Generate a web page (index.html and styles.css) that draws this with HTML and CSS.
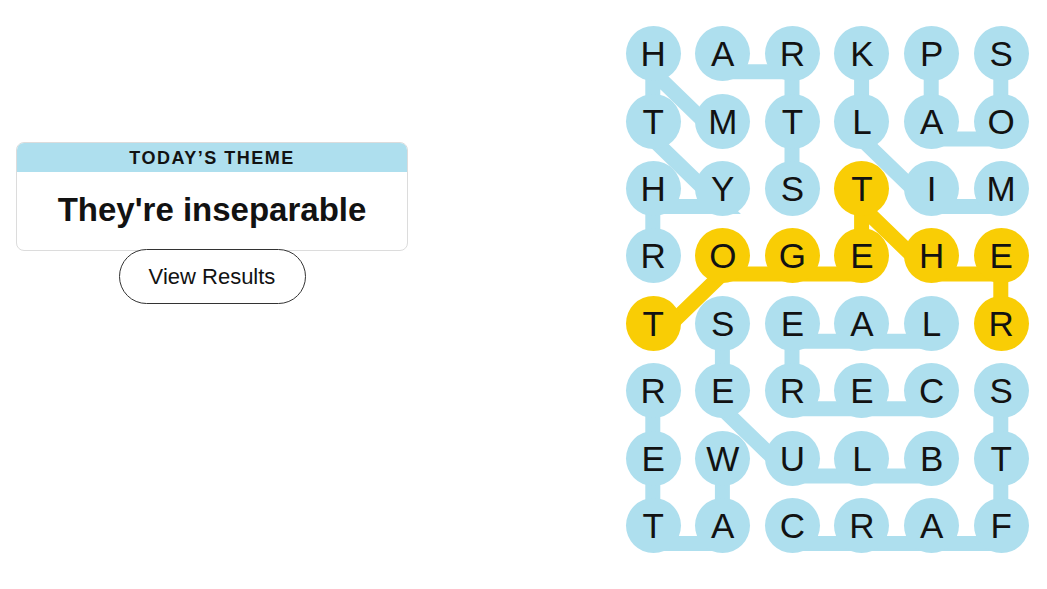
FILE: index.html
```html
<!DOCTYPE html>
<html lang="en">
<head>
<meta charset="utf-8">
<title>Strands</title>
<link rel="stylesheet" href="styles.css">
</head>
<body>
<main class="page">
  <section class="side">
    <div class="theme-card">
      <div class="theme-head">TODAY’S THEME</div>
      <div class="theme-body">They're inseparable</div>
    </div>
    <button class="results-btn" type="button">View Results</button>
  </section>

  <section class="board">
    <svg class="paths" width="418" height="540" viewBox="0 0 418 540" aria-hidden="true">
      <g class="blue">
        <polyline points="34.8,253.9 34.8,186.5 104.4,186.5 34.8,119.1 34.8,51.7 104.4,119.1"/>
        <polyline points="104.4,51.7 174,51.7 174,119.1 174,186.5"/>
        <polyline points="382.8,186.5 313.2,186.5 243.6,119.1 243.6,51.7"/>
        <polyline points="382.8,51.7 382.8,119.1 313.2,119.1 313.2,51.7"/>
        <polyline points="313.2,388.7 243.6,388.7 174,388.7 174,321.3 243.6,321.3 313.2,321.3"/>
        <polyline points="313.2,456.1 243.6,456.1 174,456.1 104.4,388.7 104.4,321.3"/>
        <polyline points="104.4,456.1 104.4,523.5 34.8,523.5 34.8,456.1 34.8,388.7"/>
        <polyline points="174,523.5 243.6,523.5 313.2,523.5 382.8,523.5 382.8,456.1 382.8,388.7"/>
      </g>
      <g class="gold">
        <polyline points="34.8,321.3 104.4,253.9 174,253.9 243.6,253.9 243.6,186.5 313.2,253.9 382.8,253.9 382.8,321.3"/>
      </g>
    </svg>

    <span class="cell found">H</span><span class="cell found">A</span><span class="cell found">R</span><span class="cell found">K</span><span class="cell found">P</span><span class="cell found">S</span>
    <span class="cell found">T</span><span class="cell found">M</span><span class="cell found">T</span><span class="cell found">L</span><span class="cell found">A</span><span class="cell found">O</span>
    <span class="cell found">H</span><span class="cell found">Y</span><span class="cell found">S</span><span class="cell span">T</span><span class="cell found">I</span><span class="cell found">M</span>
    <span class="cell found">R</span><span class="cell span">O</span><span class="cell span">G</span><span class="cell span">E</span><span class="cell span">H</span><span class="cell span">E</span>
    <span class="cell span">T</span><span class="cell found">S</span><span class="cell found">E</span><span class="cell found">A</span><span class="cell found">L</span><span class="cell span">R</span>
    <span class="cell found">R</span><span class="cell found">E</span><span class="cell found">R</span><span class="cell found">E</span><span class="cell found">C</span><span class="cell found">S</span>
    <span class="cell found">E</span><span class="cell found">W</span><span class="cell found">U</span><span class="cell found">L</span><span class="cell found">B</span><span class="cell found">T</span>
    <span class="cell found">T</span><span class="cell found">A</span><span class="cell found">C</span><span class="cell found">R</span><span class="cell found">A</span><span class="cell found">F</span>
  </section>
</main>
</body>
</html>
```

FILE: styles.css
```css
* { box-sizing: border-box; }

html, body {
  margin: 0;
  padding: 0;
  background: #ffffff;
  color: #121212;
  font-family: "Liberation Sans", Arial, sans-serif;
}

.page {
  display: flex;
  justify-content: space-between;
  align-items: flex-start;
  padding: 20px 10px 0 16px;
  width: 1047px;
  height: 589px;
}

.side {
  display: flex;
  flex-direction: column;
  align-items: center;
  width: 392px;
  margin-top: 122px;
}

.theme-card {
  width: 392px;
  border: 1px solid #dcdcdc;
  border-radius: 8px;
  overflow: hidden;
}

.theme-head {
  background: #aedfee;
  height: 30px;
  margin: -1px -1px 0 -1px;
  display: flex;
  align-items: center;
  justify-content: center;
  font-size: 18px;
  font-weight: 700;
  letter-spacing: 1.5px;
  color: #121212;
  padding-top: 2px;
}

.theme-body {
  height: 78px;
  display: flex;
  align-items: center;
  justify-content: center;
  font-size: 33px;
  font-weight: 700;
  color: #121212;
  padding-bottom: 2px;
}

.results-btn {
  margin-top: -2px;
  width: 187px;
  height: 55px;
  border: 1px solid #333333;
  border-radius: 28px;
  background: #ffffff;
  font-family: "Liberation Sans", Arial, sans-serif;
  font-size: 22px;
  color: #121212;
  padding: 0;
}

.board {
  position: relative;
  display: grid;
  grid-template-columns: repeat(6, 69.6px);
  grid-template-rows: repeat(8, 67.4px);
  width: 417.6px;
  height: 539.2px;
  margin-left: auto;
  margin-right: 1px;
}

.paths {
  position: absolute;
  left: 0;
  top: 0;
  z-index: 0;
  overflow: visible;
}

.paths polyline {
  fill: none;
  stroke-width: 15;
  stroke-linejoin: miter;
  stroke-miterlimit: 10;
  stroke-linecap: butt;
}

.paths .blue polyline { stroke: #aedfee; }
.paths .gold polyline { stroke: #f9cd05; }

.cell {
  position: relative;
  z-index: 1;
  width: 55px;
  height: 55px;
  border-radius: 50%;
  justify-self: center;
  align-self: center;
  display: flex;
  align-items: center;
  justify-content: center;
  font-size: 35px;
  line-height: 1;
  color: #121212;
}

.cell.found { background: #aedfee; }
.cell.span { background: #f9cd05; }
```
